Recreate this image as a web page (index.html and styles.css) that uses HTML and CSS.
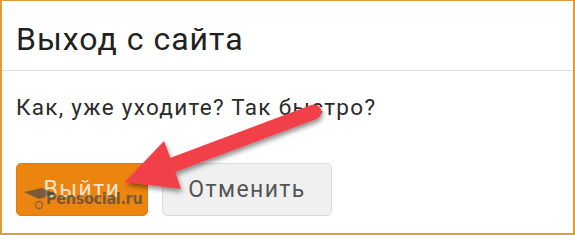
FILE: index.html
```html
<!DOCTYPE html>
<html lang="ru">
<head>
<meta charset="utf-8">
<link rel="stylesheet" href="styles.css">
</head>
<body>
<div class="frame">
  <div class="header"><h1 class="title">Выход с сайта</h1></div>
  <p class="message">Как, уже уходите? Так быстро?</p>
  <div class="actions">
    <button class="btn btn-primary">Выйти</button>
    <button class="btn btn-secondary">Отменить</button>
  </div>
  <div class="watermark">
    <svg class="wm-hat" width="32" height="22" viewBox="0 0 32 22"><polygon points="0,4 18,0 32,6 15,11" fill="#4a4a4a" opacity="0.7"/><circle cx="15" cy="17" r="3.5" fill="none" stroke="#555" stroke-width="1.3" opacity="0.65"/></svg>
    <span class="wm-text">Pensocial.ru</span>
  </div>
  <svg class="arrow" width="575" height="235" viewBox="0 0 575 235">
    <defs>
      <filter id="sh" x="-20%" y="-20%" width="140%" height="160%">
        <feDropShadow dx="1" dy="3" stdDeviation="2.5" flood-color="#000" flood-opacity="0.45"/>
      </filter>
    </defs>
    <g filter="url(#sh)" fill="#f2404a">
      <line x1="170" y1="166" x2="314" y2="112" stroke="#f2404a" stroke-width="15" stroke-linecap="round"/>
      <polygon points="125,182 164,141 172,162 181,189"/>
    </g>
  </svg>
</div>
</body>
</html>
```
FILE: styles.css
```css
html, body {
  margin: 0;
  padding: 0;
  background: #ffffff;
}
.frame {
  position: relative;
  width: 575px;
  height: 235px;
  box-sizing: border-box;
  border: 2px solid #e39a38;
  border-top-width: 1px;
  background: #ffffff;
  font-family: Roboto, "Liberation Sans", sans-serif;
  overflow: hidden;
}
.header {
  padding: 18px 14px 11px 14px;
  border-bottom: 1px solid #dedede;
}
.title {
  margin: 0;
  font-size: 32px;
  line-height: 40px;
  font-weight: 400;
  letter-spacing: 1px;
  color: #212121;
}
.message {
  margin: 23px 0 0 14px;
  font-size: 22.5px;
  line-height: 26px;
  letter-spacing: 1.3px;
  color: #2b2b2b;
}
.actions {
  display: flex;
  gap: 14px;
  margin: 43px 0 0 14px;
}
.btn {
  height: 53px;
  box-sizing: border-box;
  border-radius: 5px;
  font-family: Roboto, "Liberation Sans", sans-serif;
  font-size: 23px;
  letter-spacing: 1.4px;
  padding: 0;
}
.btn-primary {
  width: 132px;
  background: #ec8410;
  border: 1px solid #e07c0c;
  color: #fbe3c8;
}
.btn-secondary {
  width: 170px;
  background: #f0f0f0;
  border: 1px solid #dcdcdc;
  color: #555555;
}
.watermark {
  position: absolute;
  left: 22px;
  top: 187px;
  display: flex;
  align-items: flex-start;
}
.wm-hat {
  margin-right: -10px;
}
.wm-text {
  margin-top: 3px;
  font-family: "DejaVu Sans Condensed", "Liberation Sans Narrow", sans-serif;
  font-weight: 700;
  font-size: 16px;
  line-height: 16px;
  letter-spacing: -0.3px;
  color: rgba(70, 70, 70, 0.7);
}
.arrow {
  position: absolute;
  left: -2px;
  top: -1px;
  pointer-events: none;
}
```
